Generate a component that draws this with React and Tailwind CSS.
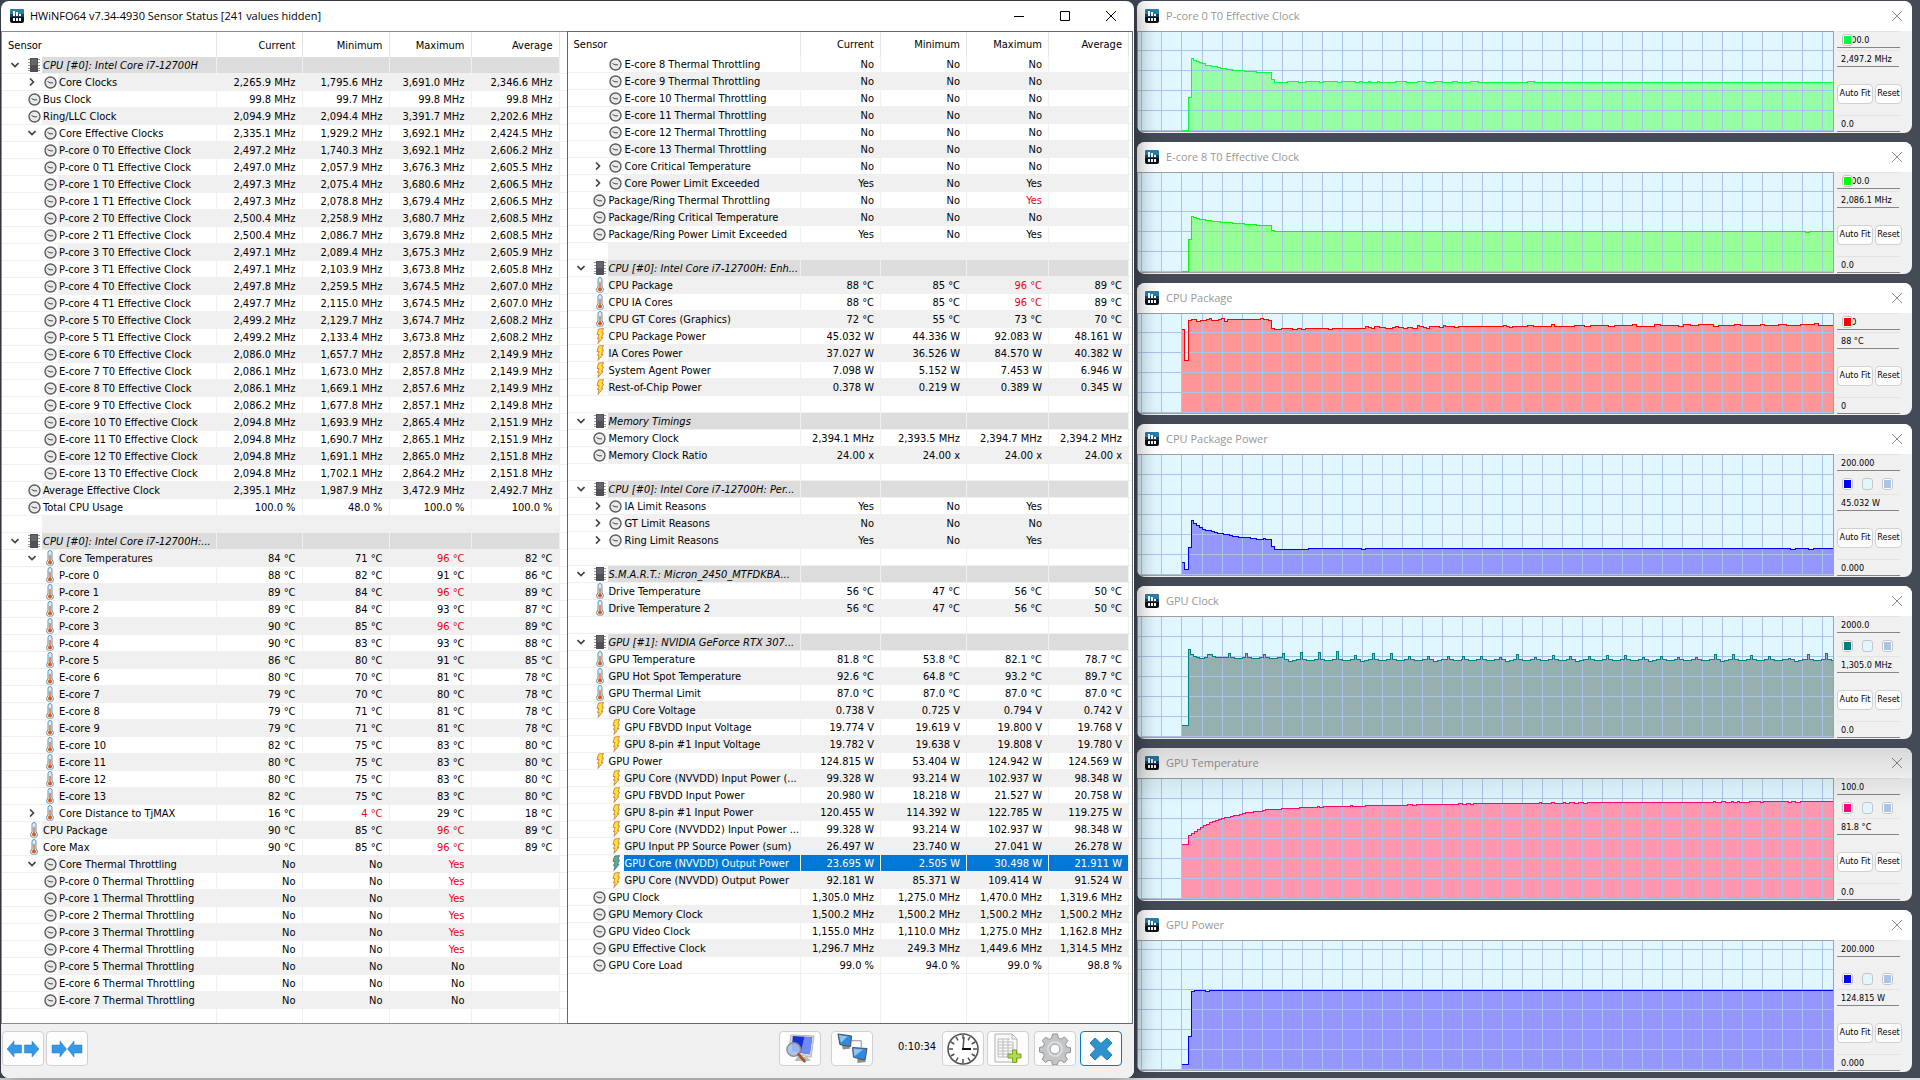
import clsx from 'clsx';

// Sensor rows: [level, icon, label, current, minimum, maximum, average, arrow]
// level 0 = group header, 1 = item, 2 = nested item, null = spacer row. A leading "!" marks an alert value.
const LEFT_ROWS = [
  [0, 'chip', 'CPU [#0]: Intel Core i7-12700H'],
  [2, 'clock', 'Core Clocks', '2,265.9 MHz', '1,795.6 MHz', '3,691.0 MHz', '2,346.6 MHz', 'right'],
  [1, 'clock', 'Bus Clock', '99.8 MHz', '99.7 MHz', '99.8 MHz', '99.8 MHz'],
  [1, 'clock', 'Ring/LLC Clock', '2,094.9 MHz', '2,094.4 MHz', '3,391.7 MHz', '2,202.6 MHz'],
  [2, 'clock', 'Core Effective Clocks', '2,335.1 MHz', '1,929.2 MHz', '3,692.1 MHz', '2,424.5 MHz', 'down'],
  [2, 'clock', 'P-core 0 T0 Effective Clock', '2,497.2 MHz', '1,740.3 MHz', '3,692.1 MHz', '2,606.2 MHz'],
  [2, 'clock', 'P-core 0 T1 Effective Clock', '2,497.0 MHz', '2,057.9 MHz', '3,676.3 MHz', '2,605.5 MHz'],
  [2, 'clock', 'P-core 1 T0 Effective Clock', '2,497.3 MHz', '2,075.4 MHz', '3,680.6 MHz', '2,606.5 MHz'],
  [2, 'clock', 'P-core 1 T1 Effective Clock', '2,497.3 MHz', '2,078.8 MHz', '3,679.4 MHz', '2,606.5 MHz'],
  [2, 'clock', 'P-core 2 T0 Effective Clock', '2,500.4 MHz', '2,258.9 MHz', '3,680.7 MHz', '2,608.5 MHz'],
  [2, 'clock', 'P-core 2 T1 Effective Clock', '2,500.4 MHz', '2,086.7 MHz', '3,679.8 MHz', '2,608.5 MHz'],
  [2, 'clock', 'P-core 3 T0 Effective Clock', '2,497.1 MHz', '2,089.4 MHz', '3,675.3 MHz', '2,605.9 MHz'],
  [2, 'clock', 'P-core 3 T1 Effective Clock', '2,497.1 MHz', '2,103.9 MHz', '3,673.8 MHz', '2,605.8 MHz'],
  [2, 'clock', 'P-core 4 T0 Effective Clock', '2,497.8 MHz', '2,259.5 MHz', '3,674.5 MHz', '2,607.0 MHz'],
  [2, 'clock', 'P-core 4 T1 Effective Clock', '2,497.7 MHz', '2,115.0 MHz', '3,674.5 MHz', '2,607.0 MHz'],
  [2, 'clock', 'P-core 5 T0 Effective Clock', '2,499.2 MHz', '2,129.7 MHz', '3,674.7 MHz', '2,608.2 MHz'],
  [2, 'clock', 'P-core 5 T1 Effective Clock', '2,499.2 MHz', '2,133.4 MHz', '3,673.8 MHz', '2,608.2 MHz'],
  [2, 'clock', 'E-core 6 T0 Effective Clock', '2,086.0 MHz', '1,657.7 MHz', '2,857.8 MHz', '2,149.9 MHz'],
  [2, 'clock', 'E-core 7 T0 Effective Clock', '2,086.1 MHz', '1,673.0 MHz', '2,857.8 MHz', '2,149.9 MHz'],
  [2, 'clock', 'E-core 8 T0 Effective Clock', '2,086.1 MHz', '1,669.1 MHz', '2,857.6 MHz', '2,149.9 MHz'],
  [2, 'clock', 'E-core 9 T0 Effective Clock', '2,086.2 MHz', '1,677.8 MHz', '2,857.1 MHz', '2,149.8 MHz'],
  [2, 'clock', 'E-core 10 T0 Effective Clock', '2,094.8 MHz', '1,693.9 MHz', '2,865.4 MHz', '2,151.9 MHz'],
  [2, 'clock', 'E-core 11 T0 Effective Clock', '2,094.8 MHz', '1,690.7 MHz', '2,865.1 MHz', '2,151.9 MHz'],
  [2, 'clock', 'E-core 12 T0 Effective Clock', '2,094.8 MHz', '1,691.1 MHz', '2,865.0 MHz', '2,151.8 MHz'],
  [2, 'clock', 'E-core 13 T0 Effective Clock', '2,094.8 MHz', '1,702.1 MHz', '2,864.2 MHz', '2,151.8 MHz'],
  [1, 'clock', 'Average Effective Clock', '2,395.1 MHz', '1,987.9 MHz', '3,472.9 MHz', '2,492.7 MHz'],
  [1, 'clock', 'Total CPU Usage', '100.0 %', '48.0 %', '100.0 %', '100.0 %'],
  null,
  [0, 'chip', 'CPU [#0]: Intel Core i7-12700H:...'],
  [2, 'temp', 'Core Temperatures', '84 °C', '71 °C', '!96 °C', '82 °C', 'down'],
  [2, 'temp', 'P-core 0', '88 °C', '82 °C', '91 °C', '86 °C'],
  [2, 'temp', 'P-core 1', '89 °C', '84 °C', '!96 °C', '89 °C'],
  [2, 'temp', 'P-core 2', '89 °C', '84 °C', '93 °C', '87 °C'],
  [2, 'temp', 'P-core 3', '90 °C', '85 °C', '!96 °C', '89 °C'],
  [2, 'temp', 'P-core 4', '90 °C', '83 °C', '93 °C', '88 °C'],
  [2, 'temp', 'P-core 5', '86 °C', '80 °C', '91 °C', '85 °C'],
  [2, 'temp', 'E-core 6', '80 °C', '70 °C', '81 °C', '78 °C'],
  [2, 'temp', 'E-core 7', '79 °C', '70 °C', '80 °C', '78 °C'],
  [2, 'temp', 'E-core 8', '79 °C', '71 °C', '81 °C', '78 °C'],
  [2, 'temp', 'E-core 9', '79 °C', '71 °C', '81 °C', '78 °C'],
  [2, 'temp', 'E-core 10', '82 °C', '75 °C', '83 °C', '80 °C'],
  [2, 'temp', 'E-core 11', '80 °C', '75 °C', '83 °C', '80 °C'],
  [2, 'temp', 'E-core 12', '80 °C', '75 °C', '83 °C', '80 °C'],
  [2, 'temp', 'E-core 13', '82 °C', '75 °C', '83 °C', '80 °C'],
  [2, 'temp', 'Core Distance to TjMAX', '16 °C', '!4 °C', '29 °C', '18 °C', 'right'],
  [1, 'temp', 'CPU Package', '90 °C', '85 °C', '!96 °C', '89 °C'],
  [1, 'temp', 'Core Max', '90 °C', '85 °C', '!96 °C', '89 °C'],
  [2, 'clock', 'Core Thermal Throttling', 'No', 'No', '!Yes', '', 'down'],
  [2, 'clock', 'P-core 0 Thermal Throttling', 'No', 'No', '!Yes', ''],
  [2, 'clock', 'P-core 1 Thermal Throttling', 'No', 'No', '!Yes', ''],
  [2, 'clock', 'P-core 2 Thermal Throttling', 'No', 'No', '!Yes', ''],
  [2, 'clock', 'P-core 3 Thermal Throttling', 'No', 'No', '!Yes', ''],
  [2, 'clock', 'P-core 4 Thermal Throttling', 'No', 'No', '!Yes', ''],
  [2, 'clock', 'P-core 5 Thermal Throttling', 'No', 'No', 'No', ''],
  [2, 'clock', 'E-core 6 Thermal Throttling', 'No', 'No', 'No', ''],
  [2, 'clock', 'E-core 7 Thermal Throttling', 'No', 'No', 'No', ''],
];

const RIGHT_ROWS = [
  [2, 'clock', 'E-core 8 Thermal Throttling', 'No', 'No', 'No', ''],
  [2, 'clock', 'E-core 9 Thermal Throttling', 'No', 'No', 'No', ''],
  [2, 'clock', 'E-core 10 Thermal Throttling', 'No', 'No', 'No', ''],
  [2, 'clock', 'E-core 11 Thermal Throttling', 'No', 'No', 'No', ''],
  [2, 'clock', 'E-core 12 Thermal Throttling', 'No', 'No', 'No', ''],
  [2, 'clock', 'E-core 13 Thermal Throttling', 'No', 'No', 'No', ''],
  [2, 'clock', 'Core Critical Temperature', 'No', 'No', 'No', '', 'right'],
  [2, 'clock', 'Core Power Limit Exceeded', 'Yes', 'No', 'Yes', '', 'right'],
  [1, 'clock', 'Package/Ring Thermal Throttling', 'No', 'No', '!Yes', ''],
  [1, 'clock', 'Package/Ring Critical Temperature', 'No', 'No', 'No', ''],
  [1, 'clock', 'Package/Ring Power Limit Exceeded', 'Yes', 'No', 'Yes', ''],
  null,
  [0, 'chip', 'CPU [#0]: Intel Core i7-12700H: Enh...'],
  [1, 'temp', 'CPU Package', '88 °C', '85 °C', '!96 °C', '89 °C'],
  [1, 'temp', 'CPU IA Cores', '88 °C', '85 °C', '!96 °C', '89 °C'],
  [1, 'temp', 'CPU GT Cores (Graphics)', '72 °C', '55 °C', '73 °C', '70 °C'],
  [1, 'bolt', 'CPU Package Power', '45.032 W', '44.336 W', '92.083 W', '48.161 W'],
  [1, 'bolt', 'IA Cores Power', '37.027 W', '36.526 W', '84.570 W', '40.382 W'],
  [1, 'bolt', 'System Agent Power', '7.098 W', '5.152 W', '7.453 W', '6.946 W'],
  [1, 'bolt', 'Rest-of-Chip Power', '0.378 W', '0.219 W', '0.389 W', '0.345 W'],
  null,
  [0, 'chip', 'Memory Timings'],
  [1, 'clock', 'Memory Clock', '2,394.1 MHz', '2,393.5 MHz', '2,394.7 MHz', '2,394.2 MHz'],
  [1, 'clock', 'Memory Clock Ratio', '24.00 x', '24.00 x', '24.00 x', '24.00 x'],
  null,
  [0, 'chip', 'CPU [#0]: Intel Core i7-12700H: Per...'],
  [2, 'clock', 'IA Limit Reasons', 'Yes', 'No', 'Yes', '', 'right'],
  [2, 'clock', 'GT Limit Reasons', 'No', 'No', 'No', '', 'right'],
  [2, 'clock', 'Ring Limit Reasons', 'Yes', 'No', 'Yes', '', 'right'],
  null,
  [0, 'chip', 'S.M.A.R.T.: Micron_2450_MTFDKBA...'],
  [1, 'temp', 'Drive Temperature', '56 °C', '47 °C', '56 °C', '50 °C'],
  [1, 'temp', 'Drive Temperature 2', '56 °C', '47 °C', '56 °C', '50 °C'],
  null,
  [0, 'chip', 'GPU [#1]: NVIDIA GeForce RTX 307...'],
  [1, 'temp', 'GPU Temperature', '81.8 °C', '53.8 °C', '82.1 °C', '78.7 °C'],
  [1, 'temp', 'GPU Hot Spot Temperature', '92.6 °C', '64.8 °C', '93.2 °C', '89.7 °C'],
  [1, 'temp', 'GPU Thermal Limit', '87.0 °C', '87.0 °C', '87.0 °C', '87.0 °C'],
  [1, 'bolt', 'GPU Core Voltage', '0.738 V', '0.725 V', '0.794 V', '0.742 V'],
  [2, 'bolt', 'GPU FBVDD Input Voltage', '19.774 V', '19.619 V', '19.800 V', '19.768 V'],
  [2, 'bolt', 'GPU 8-pin #1 Input Voltage', '19.782 V', '19.638 V', '19.808 V', '19.780 V'],
  [1, 'bolt', 'GPU Power', '124.815 W', '53.404 W', '124.942 W', '124.569 W'],
  [2, 'bolt', 'GPU Core (NVVDD) Input Power (...', '99.328 W', '93.214 W', '102.937 W', '98.348 W'],
  [2, 'bolt', 'GPU FBVDD Input Power', '20.980 W', '18.218 W', '21.527 W', '20.758 W'],
  [2, 'bolt', 'GPU 8-pin #1 Input Power', '120.455 W', '114.392 W', '122.785 W', '119.275 W'],
  [2, 'bolt', 'GPU Core (NVVDD2) Input Power ...', '99.328 W', '93.214 W', '102.937 W', '98.348 W'],
  [2, 'bolt', 'GPU Input PP Source Power (sum)', '26.497 W', '23.740 W', '27.041 W', '26.278 W'],
  [2, 'boltSelected', 'GPU Core (NVVDD) Output Power', '23.695 W', '2.505 W', '30.498 W', '21.911 W'],
  [2, 'bolt', 'GPU Core (NVVDD) Output Power', '92.181 W', '85.371 W', '109.414 W', '91.524 W'],
  [1, 'clock', 'GPU Clock', '1,305.0 MHz', '1,275.0 MHz', '1,470.0 MHz', '1,319.6 MHz'],
  [1, 'clock', 'GPU Memory Clock', '1,500.2 MHz', '1,500.2 MHz', '1,500.2 MHz', '1,500.2 MHz'],
  [1, 'clock', 'GPU Video Clock', '1,155.0 MHz', '1,110.0 MHz', '1,275.0 MHz', '1,162.8 MHz'],
  [1, 'clock', 'GPU Effective Clock', '1,296.7 MHz', '249.3 MHz', '1,449.6 MHz', '1,314.5 MHz'],
  [1, 'clock', 'GPU Core Load', '99.0 %', '94.0 %', '99.0 %', '98.8 %'],
];

// GPU clock idles on a plateau with a short spike every ~18 samples
const GPU_SPIKES = [
  [90, 36], [107, 36], [125, 37], [144, 36], [162, 35], [180, 35], [198, 34], [216, 38], [234, 36], [252, 36],
  [270, 39], [289, 39], [309, 39], [324, 39], [342, 39], [361, 40], [378, 37], [396, 40], [414, 38], [431, 39],
  [450, 39], [468, 38], [486, 38], [504, 40], [522, 39], [539, 40], [557, 40], [576, 37], [594, 37], [612, 38],
  [630, 39], [650, 41], [669, 37], [687, 36],
];

const gpuClock = [
  [44, 108], [50, 32], [52, 37], [55, 39], [58, 40], [61, 41], [66, 40], [69, 37], [74, 39], [77, 40],
  ...GPU_SPIKES.flatMap(([x, y], i) => [
    [x, y],
    [x + 2, i < 3 ? 40 : 42],
    [x + 6, i % 4 === 3 ? 44 : i < 3 ? 41 : 43],
    [x + 10, i < 3 ? 41 : 43],
    [x + 14, i < 3 ? 40 : 42],
  ]),
];

// Each chart holds a step line in pixels from the plot's top left corner
const CHARTS = [
  {
    title: 'P-core 0 T0 Effective Clock', height: 99, compact: true,
    max: '5000.0', value: '2,497.2 MHz', min: '0.0',
    line: 'stroke-[#00ff3c]', fill: 'fill-[#96ffa5]', swatch: 'bg-[#00ff3c]',
    points: [
      [44, 98], [50, 65], [53, 26], [55, 28], [58, 29], [61, 30], [64, 31], [67, 33], [73, 34], [79, 35], [82, 36],
      [88, 37], [94, 38], [106, 39], [118, 40], [133, 47], [136, 50], [149, 49], [160, 50], [167, 49], [181, 50],
      [185, 49], [199, 50], [203, 49], [217, 50], [221, 49], [224, 50], [230, 49], [232, 50], [239, 49], [241, 50],
      [257, 49], [268, 50], [279, 49], [287, 50], [296, 49], [304, 50], [314, 49], [319, 50], [332, 49], [340, 50],
      [389, 49], [396, 50],
    ],
  },
  {
    title: 'E-core 8 T0 Effective Clock', height: 99, compact: true,
    max: '5000.0', value: '2,086.1 MHz', min: '0.0',
    line: 'stroke-[#00ff00]', fill: 'fill-[#96ff96]', swatch: 'bg-[#00ff00]',
    points: [
      [44, 98], [50, 66], [53, 43], [55, 44], [58, 45], [61, 46], [67, 47], [73, 48], [82, 49], [94, 50],
      [106, 51], [118, 52], [133, 57], [136, 58], [667, 59], [671, 58],
    ],
  },
  {
    title: 'CPU Package', height: 99, compact: true,
    max: '100', value: '88 °C', min: '0',
    line: 'stroke-[#ff0000]', fill: 'fill-[#ff9696]', swatch: 'bg-[#ff0000]',
    points: [
      [44, 15], [46, 46], [50, 6], [53, 5], [58, 7], [62, 6], [68, 5], [71, 4], [73, 6], [80, 5], [83, 4], [86, 7],
      [89, 5], [122, 4], [125, 5], [130, 6], [133, 14], [136, 15], [143, 14], [154, 15], [159, 14], [163, 15],
      [167, 14], [190, 15], [194, 14], [227, 12], [230, 13], [233, 14], [236, 12], [241, 13], [247, 14], [254, 13],
      [257, 12], [260, 13], [265, 14], [269, 13], [274, 14], [279, 11], [281, 12], [285, 13], [288, 14], [291, 12],
      [301, 13], [305, 11], [307, 12], [316, 13], [320, 12], [365, 11], [368, 12], [371, 13], [374, 12], [389, 11],
      [395, 12], [413, 10], [416, 12], [436, 11], [446, 12], [452, 11], [470, 12], [476, 11], [494, 10], [498, 12],
      [516, 10], [522, 11], [540, 12], [545, 10], [552, 11], [560, 10], [575, 12], [580, 11], [596, 10], [602, 11],
      [622, 10], [626, 11], [640, 10], [648, 11], [662, 10], [676, 9], [680, 11],
    ],
  },
  {
    title: 'CPU Package Power', height: 120,
    max: '200.000', value: '45.032 W', min: '0.000',
    line: 'stroke-[#0000ff]', fill: 'fill-[#9696ff]', swatch: 'bg-[#0000ff]',
    points: [
      [44, 107], [46, 114], [50, 92], [53, 65], [55, 68], [58, 70], [61, 72], [64, 74], [67, 75], [73, 76],
      [76, 77], [79, 78], [85, 79], [91, 80], [94, 81], [100, 82], [112, 83], [118, 84], [125, 83], [127, 84],
      [133, 91], [136, 94], [170, 93], [223, 94], [227, 93], [652, 94], [657, 93], [670, 94], [675, 93],
    ],
  },
  {
    title: 'GPU Clock', height: 120,
    max: '2000.0', value: '1,305.0 MHz', min: '0.0',
    line: 'stroke-[#008080]', fill: 'fill-[#96b0b0]', swatch: 'bg-[#008080]',
    points: gpuClock,
  },
  {
    title: 'GPU Temperature', height: 120, shaded: true,
    max: '100.0', value: '81.8 °C', min: '0.0',
    line: 'stroke-[#ff0080]', fill: 'fill-[#ff96b0]', swatch: 'bg-[#ff0080]',
    points: [
      [44, 65], [50, 56], [53, 54], [56, 52], [59, 50], [62, 48], [65, 46], [68, 45], [71, 43], [74, 42], [77, 41],
      [80, 40], [83, 39], [86, 38], [92, 37], [95, 36], [101, 35], [104, 34], [107, 33], [115, 32], [124, 31],
      [127, 30], [143, 29], [161, 28], [179, 27], [181, 28], [185, 27], [212, 26], [214, 27], [227, 26], [269, 25],
      [274, 26], [278, 25], [320, 24], [324, 25], [328, 24], [332, 25], [335, 24], [401, 23], [403, 24], [413, 23],
      [416, 24], [425, 23], [427, 24], [431, 23], [436, 24], [440, 23], [445, 24], [449, 23], [575, 22], [577, 23],
      [583, 22], [587, 23], [593, 22], [595, 23], [599, 22], [601, 23], [611, 22], [622, 23], [625, 22], [650, 23],
      [653, 22], [657, 23], [662, 22],
    ],
  },
  {
    title: 'GPU Power', height: 129,
    max: '200.000', value: '124.815 W', min: '0.000',
    line: 'stroke-[#0000ff]', fill: 'fill-[#9696ff]', swatch: 'bg-[#0000ff]',
    points: [[44, 123], [50, 95], [53, 50], [56, 49], [67, 50], [71, 49]],
  },
];

const GRID_X = [3, 23, 43, ...Array.from({ length: 120 }, (_, i) => 64 + i * 20)];

function AppLogo() {
  return (
    <svg viewBox="0 0 14 14" className="size-3.5 shrink-0" aria-hidden="true">
      <rect width="14" height="14" rx="2" fill="#0d1116" />
      <path d="M2 0h10a2 2 0 0 1 2 2v5H0V2a2 2 0 0 1 2-2z" fill="#2a7fae" />
      <path d="M0 5h14v3H0z" fill="#14435f" />
      <path d="M3 2h2v5H3zM6 3h2v4H6zM9 5h2v2H9zM3 9h2v3H3zM6 9h2v3H6zM9 9h2v3H9z" fill="#fff" />
    </svg>
  );
}

function SensorIcon({ name }) {
  if (name === 'chip') {
    return (
      <svg viewBox="0 0 12 14" className="h-3.5 w-3" aria-hidden="true">
        <path d="M0 1.5h12M0 4.5h12M0 7.5h12M0 10.5h12M0 12.5h12" stroke="#9a9a9a" />
        <rect x="2" width="8" height="14" fill="#4f5054" />
        <rect x="3" y="1" width="6" height="6" fill="#66676b" />
      </svg>
    );
  }
  if (name === 'temp') {
    return (
      <svg viewBox="0 0 8 16" className="h-4 w-2" aria-hidden="true">
        <path d="M2 2.5a2 2 0 0 1 4 0V10a3.4 3.4 0 1 1-4 0z" fill="#dcedf7" stroke="#5f93b5" />
        <path d="M4 5v7" stroke="#ee6a1c" strokeWidth="1.4" />
        <circle cx="4" cy="12.5" r="2" fill="#e8540c" />
      </svg>
    );
  }
  if (name === 'bolt' || name === 'boltSelected') {
    const selected = name === 'boltSelected';
    return (
      <svg viewBox="0 0 8 16" className="h-4 w-2" aria-hidden="true">
        <path
          d="M2.500 1 7.500.5 6 4.500l1.500.5-2 4.500H7L2 15.500l1-5H1.500L3 6.500H1z"
          fill={selected ? '#5fae7c' : '#ffe03a'}
          stroke={selected ? '#3f6f9c' : '#c8742c'}
          strokeWidth="0.8"
        />
      </svg>
    );
  }
  return (
    <svg viewBox="0 0 13 13" className="size-[13px]" aria-hidden="true">
      <circle cx="6.5" cy="6.5" r="5.5" fill="#e9e9e9" stroke="#5c5c5c" strokeWidth="1.4" />
      <path d="M3.5 5.5 6 6.8h3" fill="none" stroke="#4a4a4a" />
    </svg>
  );
}

function Arrow({ dir }) {
  return (
    <svg viewBox="0 0 8 8" className="size-2" fill="none" stroke="#404040" strokeWidth="1.6" aria-hidden="true">
      <path d={dir === 'right' ? 'M2 0.5 5.5 4 2 7.5' : 'M0.5 2 4 5.5 7.5 2'} />
    </svg>
  );
}

function SensorRow({ row, striped }) {
  const [level, icon, label, current, minimum, maximum, average, arrow] = row || [];
  const selected = icon === 'boltSelected';
  const fill = selected
    ? 'bg-[#0078d7] text-white'
    : level === 0
      ? 'bg-[#dcdcdc]'
      : striped
        ? 'bg-[#f0f0f0]'
        : 'bg-white';
  const dir = level === 0 ? 'down' : arrow;

  return (
    <tr className="h-[17px]">
      <td className="border-r border-b border-[#f0f0f0] p-0">
        <div className="flex h-4 items-center">
          <span className={clsx('flex shrink-0 items-center', level === 2 ? 'w-14' : 'w-10')}>
            <span className={clsx('flex justify-center', level === 2 ? 'w-10 pl-5' : 'w-6 pl-0.5')}>
              {dir && <Arrow dir={dir} />}
            </span>
            <span className="flex w-4 justify-center">{row && <SensorIcon name={icon} />}</span>
          </span>
          <span className={clsx('h-4 min-w-0 flex-1 overflow-hidden pt-0.5 pl-px', fill, level === 0 && 'italic')}>
            {label}
          </span>
        </div>
      </td>
      {[current, minimum, maximum, average].map((value, i) => {
        const alert = value?.startsWith('!');
        return (
          <td
            key={i}
            className={clsx(
              'border-r border-b border-[#f0f0f0] pt-0.5 pr-1.5 pb-0 pl-0 text-right',
              fill,
              alert && 'text-[#f00014]'
            )}
          >
            {alert ? value.slice(1) : value}
          </td>
        );
      })}
      <td className="border-b border-[#f0f0f0] p-0" />
    </tr>
  );
}

function SensorTable({ rows, cols, headHeight, tailHeight, stripeShiftAt = Infinity, className }) {
  return (
    <div className={clsx('min-w-0 flex-1 border-y border-l bg-white', className)}>
      <table className="w-full table-fixed border-separate border-spacing-0 text-[11px] leading-[14px] whitespace-nowrap text-black">
        <colgroup>
          <col />
          {cols.map((c, i) => (
            <col key={i} className={c} />
          ))}
        </colgroup>
        <thead>
          <tr className={headHeight}>
            <th className="border-r border-[#e5e5e5] pt-0.5 pr-0 pb-0 pl-1.5 text-left font-normal">Sensor</th>
            {['Current', 'Minimum', 'Maximum', 'Average'].map((h) => (
              <th key={h} className="border-r border-[#e5e5e5] pt-0.5 pr-1.5 pb-0 pl-0 text-right font-normal">
                {h}
              </th>
            ))}
            <th className="p-0" />
          </tr>
        </thead>
        <tbody>
          {rows.map((row, i) => (
            <SensorRow key={i} row={row} striped={(i < stripeShiftAt ? i : i + 1) % 2 === 1} />
          ))}
          <tr className={tailHeight}>
            {[0, 1, 2, 3, 4].map((i) => (
              <td key={i} className="border-r border-[#f0f0f0] p-0" />
            ))}
            <td className="p-0" />
          </tr>
        </tbody>
      </table>
    </div>
  );
}

function ToolButton({ label, active, children }) {
  return (
    <button
      type="button"
      aria-label={label}
      className={clsx(
        'flex h-[35px] w-[42px] items-center justify-center rounded-sm border bg-[#fdfdfd]',
        active ? 'border-[#0078d4]' : 'border-[#d0d0d0]'
      )}
    >
      {children}
    </button>
  );
}

function Toolbar() {
  return (
    <div className="flex h-[54px] shrink-0 items-start bg-[#f0f0f0] pt-[7px] pr-3 pl-px">
      <div className="flex gap-0.5">
        <ToolButton label="Expand columns">
          <svg viewBox="0 0 32 18" className="h-[18px] w-8" fill="#3498e6" stroke="#2478bd" strokeWidth="0.5">
            <path d="M0 9 7 1v4h7.500v8H7v4zM32 9l-7-8v4h-7.500v8H25v4z" />
          </svg>
        </ToolButton>
        <ToolButton label="Collapse columns">
          <svg viewBox="0 0 32 18" className="h-[18px] w-8" fill="#3498e6" stroke="#2478bd" strokeWidth="0.5">
            <path d="M15.500 9 9 1v4H1v8h8v4zM16.500 9 23 1v4h8v8h-8v4z" />
          </svg>
        </ToolButton>
      </div>

      <div className="ml-auto flex">
        <ToolButton label="System summary">
          <svg viewBox="0 0 32 32" className="size-[31px]">
            <path d="M6 2 30 3l-3 22L4 21z" fill="#d8d8d8" stroke="#b5b5b5" />
            <path d="m8 3 20 1.500L25.500 22 7 19z" fill="#1a2fd0" />
            <path d="m20 4 8 .5L25.500 22 16 20.500z" fill="#6f8cf2" />
            <path d="m13 24 10 1 4 4H10z" fill="#b9b9b9" />
            <circle cx="9" cy="17" r="7" fill="#a9c4ee" fillOpacity="0.9" stroke="#8a8f98" strokeWidth="1.5" />
            <path d="m14 22 6 7" stroke="#a8562a" strokeWidth="3" strokeLinecap="round" />
          </svg>
        </ToolButton>
      </div>
      <div className="ml-2.5">
        <ToolButton label="Remote monitoring">
          <svg viewBox="0 0 34 32" className="h-[31px] w-[33px]">
            <path d="M16 8h10v7" fill="none" stroke="#8c8c8c" />
            <path d="m6 12 6 0 3 4-8 1z" fill="#8f8f8f" />
            <path d="m2 1 14 2-1 11L4 12z" fill="#2f8be0" stroke="#4d4d4d" />
            <path d="m3 2 9 1.500L5 10z" fill="#8cc4f5" />
            <path d="m22 26 6 0 3 4-9 1z" fill="#8f8f8f" />
            <path d="m17 15 15 1-2 12-12-3z" fill="#2f8be0" stroke="#4d4d4d" />
            <path d="m18 16 10 1-9 7z" fill="#8cc4f5" />
          </svg>
        </ToolButton>
      </div>
      <span className="ml-[25px] w-[38px] text-[11px] leading-8 text-black">0:10:34</span>
      <div className="ml-1.5 flex gap-[3px]">
        <ToolButton label="Reset timer">
          <svg viewBox="0 0 32 32" className="size-8" fill="none" stroke="#505050">
            <circle cx="16" cy="16" r="15" fill="#fff" strokeWidth="1.5" />
            {Array.from({ length: 12 }, (_, i) => (
              <path key={i} d="M16 2v4" strokeWidth="1.5" transform={`rotate(${i * 30} 16 16)`} />
            ))}
            <path d="M16 16 17 4" strokeWidth="1.5" />
            <path d="M15 16h9" stroke="#111" strokeWidth="2" />
          </svg>
        </ToolButton>
        <ToolButton label="Start logging">
          <svg viewBox="0 0 28 32" className="h-8 w-7">
            <path d="M1 1h17l5 5v23H1z" fill="#fafafa" stroke="#b0b0b0" />
            <path d="M18 1v5h5" fill="none" stroke="#b0b0b0" />
            <path d="M4 6h12M4 9h15M4 12h15M4 15h15M4 18h15M4 21h13M4 24h10M4 6v18M9 6v18M14 6v18M19 9v9" stroke="#bcbcbc" />
            <path d="M18.500 17h4v4h4.500v4h-4.500v4.500h-4V25H14v-4h4.500z" fill="#b3d94c" stroke="#7aa21d" />
          </svg>
        </ToolButton>
      </div>
      <div className="ml-[5px] flex gap-1">
        <ToolButton label="Settings">
          <svg viewBox="0 0 32 32" className="size-8">
            <path
              d="m13.500 1 5 0 .8 4 2.700 1.200L25.500 4 29 7.500 26.500 11l1.200 3 3.800.8v4.500l-4 .8-1.200 2.900 2.200 3.400-3.300 3.300-3.400-2.200-2.800 1.200-.8 3.300h-4.600l-.8-3.600-2.900-1.200-3.300 2.200L3 26.200l2.300-3.400L4 19.900.5 19v-4.500l3.700-.8 1.200-2.900L3.300 7.500l3.400-3.300 3.300 2.200 2.700-1.200z"
              fill="#c3c6c8"
              stroke="#8f9395"
            />
            <circle cx="16" cy="16" r="8" fill="#d9dbdc" />
            <circle cx="16" cy="16" r="5" fill="#fdfdfd" stroke="#8f9395" />
          </svg>
        </ToolButton>
        <ToolButton label="Close sensors" active>
          <svg viewBox="0 0 24 24" className="size-6">
            <path d="m1 6 5-5 6 5.500L18 1l5 5-5.500 6 5.500 6-5 5-6-5.500L6 23l-5-5 5.500-6z" fill="#2e93cd" stroke="#2380b8" />
          </svg>
        </ToolButton>
      </div>
    </div>
  );
}

function MainWindow() {
  return (
    <main className="relative z-10 flex min-w-0 flex-[1133] flex-col overflow-hidden rounded-lg bg-white shadow-[0_0_26px_rgba(0,0,0,0.5)]">
      <header className="flex h-[30px] shrink-0 items-center pl-[9px]">
        <AppLogo />
        <h1 className="pl-1.5 font-['Open_Sans',sans-serif] text-[11px] leading-4 text-black">
          HWiNFO64 v7.34-4930 Sensor Status [241 values hidden]
        </h1>
        <div className="ml-auto flex h-full text-black">
          {[
            ['Minimize', 'M0 5.5h10'],
            ['Maximize', 'M.5.5h9v9h-9z'],
            ['Close', 'M0 0l10 10M10 0 0 10'],
          ].map(([label, d]) => (
            <button key={label} type="button" aria-label={label} className="flex w-[46px] items-center justify-center">
              <svg viewBox="0 0 10 10" className="size-2.5 overflow-visible" fill="none" stroke="currentColor">
                <path d={d} />
              </svg>
            </button>
          ))}
        </div>
      </header>
      <div className="flex flex-1 pr-px">
        <SensorTable
          rows={LEFT_ROWS}
          cols={['w-[86px]', 'w-[87px]', 'w-[82px]', 'w-[88px]', 'w-[7px]']}
          headHeight="h-[25px]"
          tailHeight="h-3.5"
          className="border-[#8a8d94]"
        />
        <SensorTable
          rows={RIGHT_ROWS}
          cols={['w-20', 'w-[86px]', 'w-[82px]', 'w-20', 'w-[3px]']}
          headHeight="h-6"
          tailHeight="h-[49px]"
          stripeShiftAt={28}
          className="border-r border-[#64676e]"
        />
      </div>
      <Toolbar />
    </main>
  );
}

function StepChart({ points, height, line, fill }) {
  const [first, ...rest] = points;
  const d = `M${first[0]} ${first[1] + 0.5}` + rest.map(([x, y]) => `H${x + 0.5}V${y + 0.5}`).join('') + 'H4000';
  const rowsY = [];
  for (let y = height - 1; y > 0; y -= 20) rowsY.push(y);

  return (
    <svg className="block w-full bg-[#e0f7ff]" height={height} shapeRendering="crispEdges" aria-hidden="true">
      <path d={`${d}V${height}H${first[0]}z`} className={fill} />
      <g fill="#aac3e8">
        {GRID_X.map((x) => (
          <rect key={x} x={x} width="1" height={height} />
        ))}
        {rowsY.map((y) => (
          <rect key={y} y={y} width="4000" height="1" />
        ))}
      </g>
      <path d={d} fill="none" className={line} />
    </svg>
  );
}

const fieldClass =
  'block h-[17px] border-t border-b border-t-[#e3e3e3] border-b-[#858585] bg-[#f0f0f0] px-1 text-[9px] text-black outline-none';
const swatchClass = 'h-3 w-[11px] rounded-[3px] border border-[#c6c6c6] p-px';

function ChartWindow({ chart }) {
  const { title, height, compact, shaded, max, value, min, line, fill, swatch, points } = chart;
  return (
    <section aria-label={title} className="relative flex flex-col overflow-hidden rounded-lg bg-[#f0f0f0]">
      <header className="flex h-[30px] items-center bg-white pl-2">
        <AppLogo />
        <h2 className="pl-[7px] font-['Open_Sans',sans-serif] text-[11px] leading-4 text-[#979797]">{title}</h2>
        <button type="button" aria-label={`Close ${title}`} className="ml-auto flex h-full w-[30px] items-center justify-center">
          <svg viewBox="0 0 10 10" className="size-2.5 overflow-visible" stroke="#8a8a8a">
            <path d="M0 0l10 10M10 0 0 10" />
          </svg>
        </button>
      </header>
      <div className="flex pb-px">
        <div className="min-w-0 flex-1 border border-[#a0a0a0]">
          <StepChart points={points} height={height} line={line} fill={fill} />
        </div>
        <div className="relative flex w-[78px] shrink-0 flex-col pl-[3px]">
          <input readOnly aria-label={`${title} maximum`} defaultValue={max} className={clsx(fieldClass, 'w-[63px]')} />
          {compact ? (
            // short windows have no room for the swatch row, so it sits over the maximum field
            <div className="absolute top-[3px] left-1.5 flex bg-[#f0f0f0] pl-0.5">
              <button type="button" aria-label="Line color" className={clsx(swatchClass, 'bg-white')}>
                <span className={clsx('block h-full', swatch)} />
              </button>
            </div>
          ) : (
            <div className="mt-auto mb-1 flex gap-[9px] pl-[5px]">
              <button type="button" aria-label="Line color" className={clsx(swatchClass, 'bg-white')}>
                <span className={clsx('block h-full', swatch)} />
              </button>
              <button type="button" aria-label="Background color" className={clsx(swatchClass, 'bg-[#e0f7ff]')} />
              <button type="button" aria-label="Grid color" className={clsx(swatchClass, 'bg-white')}>
                <span className="block h-full bg-[#aac3e8]" />
              </button>
            </div>
          )}
          <input
            readOnly
            aria-label={`${title} current`}
            defaultValue={value}
            className={clsx(fieldClass, 'w-[62px]', compact && 'mt-auto')}
          />
          <div className="mt-[17px] mb-[11px] flex gap-0.5 text-[9px] text-black">
            <button type="button" className="h-5 w-9 rounded-sm border border-[#d0d0d0] bg-[#fdfdfd] whitespace-nowrap">
              Auto Fit
            </button>
            <button type="button" className="h-5 w-[27px] rounded-sm border border-[#d0d0d0] bg-[#fdfdfd]">
              Reset
            </button>
          </div>
          <input readOnly aria-label={`${title} minimum`} defaultValue={min} className={clsx(fieldClass, 'w-[63px]')} />
        </div>
      </div>
      {shaded && (
        <div className="pointer-events-none absolute inset-x-0 top-0 h-14 bg-linear-to-b from-black/15 to-transparent" />
      )}
    </section>
  );
}

export default function App() {
  return (
    <div className="flex min-h-screen flex-col bg-[#444b57] font-['DejaVu_Sans_Condensed','DejaVu_Sans',sans-serif]">
      <div className="flex flex-1 gap-[3px] pt-px pr-2 pl-px">
        <MainWindow />
        <div className="flex min-w-0 flex-[775] flex-col gap-[9px]">
          {CHARTS.map((chart) => (
            <ChartWindow key={chart.title} chart={chart} />
          ))}
        </div>
      </div>
      <div className="h-0.5 bg-[#dcdde1]" />
    </div>
  );
}
